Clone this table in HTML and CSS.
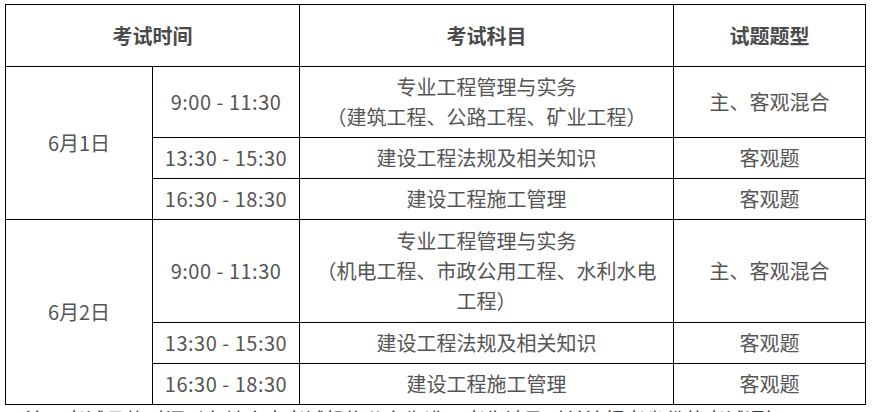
FILE: index.html
```html
<!DOCTYPE html>
<html lang="zh-CN">
<head>
<meta charset="utf-8">
<link rel="stylesheet" href="styles.css">
</head>
<body>
<div class="page">
<table class="exam">
  <colgroup>
    <col class="c1"><col class="c2"><col class="c3"><col class="c4">
  </colgroup>
  <thead>
    <tr><th colspan="2">考试时间</th><th>考试科目</th><th>试题题型</th></tr>
  </thead>
  <tbody>
    <tr><td rowspan="3">6月1日</td><td class="time">9:00 - 11:30</td><td>专业工程管理与实务<br>（建筑工程、公路工程、矿业工程）</td><td>主、客观混合</td></tr>
    <tr><td class="time">13:30 - 15:30</td><td>建设工程法规及相关知识</td><td>客观题</td></tr>
    <tr><td class="time">16:30 - 18:30</td><td>建设工程施工管理</td><td>客观题</td></tr>
    <tr><td rowspan="3">6月2日</td><td class="time">9:00 - 11:30</td><td class="wrap">专业工程管理与实务<br>（机电工程、市政公用工程、水利水电工程）</td><td>主、客观混合</td></tr>
    <tr><td class="time">13:30 - 15:30</td><td>建设工程法规及相关知识</td><td>客观题</td></tr>
    <tr><td class="time">16:30 - 18:30</td><td>建设工程施工管理</td><td>客观题</td></tr>
  </tbody>
</table>
<p class="note">注：考试具体时间以各地人事考试机构公布为准，考生请及时关注报考省份的考试通知。</p>
</div>
</body>
</html>
```
FILE: styles.css
```css
html, body { margin: 0; padding: 0; background: #fff; }
body { font-family: "Noto Sans CJK SC", "Noto Sans", sans-serif; color: #555; }
.page { padding: 4px 0 0 5px; }
.exam {
  border-collapse: collapse;
  table-layout: fixed;
  width: 861px;
  font-size: 20px;
}
.c1 { width: 147px; }
.c2 { width: 147px; }
.c3 { width: 374px; }
.c4 { width: 192px; }
.exam th, .exam td {
  border: 1px solid #000;
  text-align: center;
  vertical-align: middle;
  line-height: 30px;
  padding: 5px 4px;
  font-weight: normal;
}
.exam th {
  font-weight: bold;
  padding: 15px 4px;
  line-height: 31px;
  color: #4a4a4a;
}
.exam td.time { letter-spacing: 0.5px; }
.exam td.wrap { padding: 6px 12px; }
.exam tbody tr { height: 41px; }
.note { margin: 3px 0 0 0; font-size: 20px; line-height: 24px; color: #333; padding-left: 20px; }
```
